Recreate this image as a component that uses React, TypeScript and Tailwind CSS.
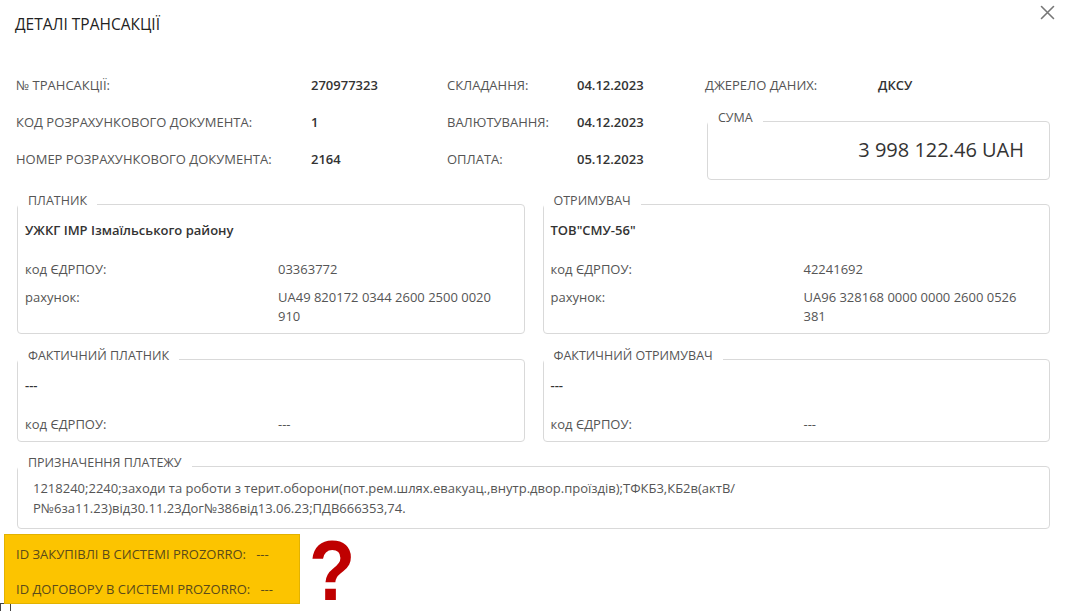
import type { ReactNode } from "react";

type InfoRow = [string, string, string, string];

const infoRows: InfoRow[] = [
  ["№ ТРАНСАКЦІЇ:", "270977323", "СКЛАДАННЯ:", "04.12.2023"],
  ["КОД РОЗРАХУНКОВОГО ДОКУМЕНТА:", "1", "ВАЛЮТУВАННЯ:", "04.12.2023"],
  ["НОМЕР РОЗРАХУНКОВОГО ДОКУМЕНТА:", "2164", "ОПЛАТА:", "05.12.2023"],
];

function Box({
  title,
  children,
  className = "",
}: {
  title: string;
  children: ReactNode;
  className?: string;
}) {
  return (
    <fieldset
      className={`rounded-[4px] border border-[#d9d9d9] pl-[7px] pr-[16px] ${className}`}
    >
      <legend className="-ml-[7px] px-[10px] pb-[6px] text-[12.5px] leading-[18px] text-[#555]">
        {title}
      </legend>
      {children}
    </fieldset>
  );
}

type Party = {
  title: string;
  name: string;
  code: string;
  account?: string;
};

function PartyBox({ title, name, code, account }: Party) {
  return (
    <Box title={title} className="pb-[7px]">
      <div className="mt-[5px] text-[13px] leading-[19px] font-semibold text-[#333]">
        {name}
      </div>
      <div className="mt-[20px] grid grid-cols-[253px_1fr] gap-y-[9px] text-[13px] leading-[19px] text-[#555]">
        <div>код ЄДРПОУ:</div>
        <div>{code}</div>
        {account && (
          <>
            <div>рахунок:</div>
            <div className="max-w-[229px]">{account}</div>
          </>
        )}
      </div>
    </Box>
  );
}

export default function App() {
  return (
    <div className="relative h-[611px] w-[1068px] overflow-hidden bg-white font-['Open_Sans',sans-serif] text-[13px] text-[#555]">
      {/* Header */}
      <div className="flex h-[67px] items-start justify-between pl-[15px] pr-[13px]">
        <h2 className="pt-[14px] text-[15.5px] leading-[20px] font-medium text-[#222]">
          ДЕТАЛІ ТРАНСАКЦІЇ
        </h2>
        <button className="mt-[5px] text-[#777]">
          <svg width="15" height="15" viewBox="0 0 15 15" fill="none">
            <path
              d="M1.5 1.5 L13.5 13.5 M13.5 1.5 L1.5 13.5"
              stroke="currentColor"
              strokeWidth="1.6"
              strokeLinecap="round"
            />
          </svg>
        </button>
      </div>

      {/* Transaction info */}
      <div className="grid grid-cols-[295px_136px_130px_128px_1fr] grid-rows-[37px_37px_37px] items-center pl-[16px] pr-[18px] leading-[19px]">
        {infoRows.map((r, i) => (
          <div key={i} className="contents">
            <div>{r[0]}</div>
            <div className="font-semibold text-[#333]">{r[1]}</div>
            <div>{r[2]}</div>
            <div className="font-semibold text-[#333]">{r[3]}</div>
            {i === 0 && (
              <div className="flex">
                <div className="w-[173px]">ДЖЕРЕЛО ДАНИХ:</div>
                <div className="font-semibold text-[#333]">ДКСУ</div>
              </div>
            )}
            {i === 1 && (
              <fieldset className="row-span-2 ml-[2px] mt-[5px] h-[71px] self-start rounded-[4px] border border-[#d9d9d9] pr-[25px]">
                <legend className="px-[10px] pb-[6px] text-[12.5px] leading-[18px] text-[#555]">
                  СУМА
                </legend>
                <div className="flex h-[34px] items-center justify-end text-[20px] leading-[26px] text-[#333]">
                  3 998 122.46 UAH
                </div>
              </fieldset>
            )}
          </div>
        ))}
      </div>

      {/* Parties */}
      <div className="mt-[14px] pl-[17px] pr-[18px]">
        <div className="grid grid-cols-2 gap-x-[18px] gap-y-[13px]">
          <PartyBox
            title="ПЛАТНИК"
            name="УЖКГ ІМР Ізмаїльського району"
            code="03363772"
            account="UA49 820172 0344 2600 2500 0020 910"
          />
          <PartyBox
            title="ОТРИМУВАЧ"
            name={'ТОВ"СМУ-56"'}
            code="42241692"
            account="UA96 328168 0000 0000 2600 0526 381"
          />
          <PartyBox title="ФАКТИЧНИЙ ПЛАТНИК" name="---" code="---" />
          <PartyBox title="ФАКТИЧНИЙ ОТРИМУВАЧ" name="---" code="---" />
        </div>

        <Box title="ПРИЗНАЧЕННЯ ПЛАТЕЖУ" className="mt-[12px] pb-[10px]">
          <p className="pl-[8px] text-[13px] leading-[20px] text-[#555]">
            1218240;2240;заходи та роботи з терит.оборони(пот.рем.шлях.евакуац.,внутр.двор.проїздів);ТФКБ3,КБ2в(актВ/
            <br />
            Р№6за11.23)від30.11.23Дог№386від13.06.23;ПДВ666353,74.
          </p>
        </Box>
      </div>

      {/* Prozorro ids */}
      <div className="mt-[5px] flex items-start pl-[4px]">
        <div className="flex h-[70px] w-[296px] flex-col justify-between border border-[#e2b200] bg-[#fcc400] pt-[9px] pb-[4px] pl-[11px] text-[13px] leading-[20px] text-[#5a4a1a]">
          <div>ID ЗАКУПІВЛІ В СИСТЕМІ PROZORRO:&nbsp;&nbsp;&nbsp;---</div>
          <div>ID ДОГОВОРУ В СИСТЕМІ PROZORRO:&nbsp;&nbsp;&nbsp;---</div>
        </div>
        <div className="ml-[9px] -mt-[3px] -mb-[5px] origin-left scale-x-[0.88] font-['Liberation_Sans',sans-serif] text-[86px] leading-[78px] font-bold text-[#bf0000]">
          ?
        </div>
      </div>
      <div className="-mt-[1px] h-[9px] w-[11px] border-x border-t border-[#444]" />
    </div>
  );
}
